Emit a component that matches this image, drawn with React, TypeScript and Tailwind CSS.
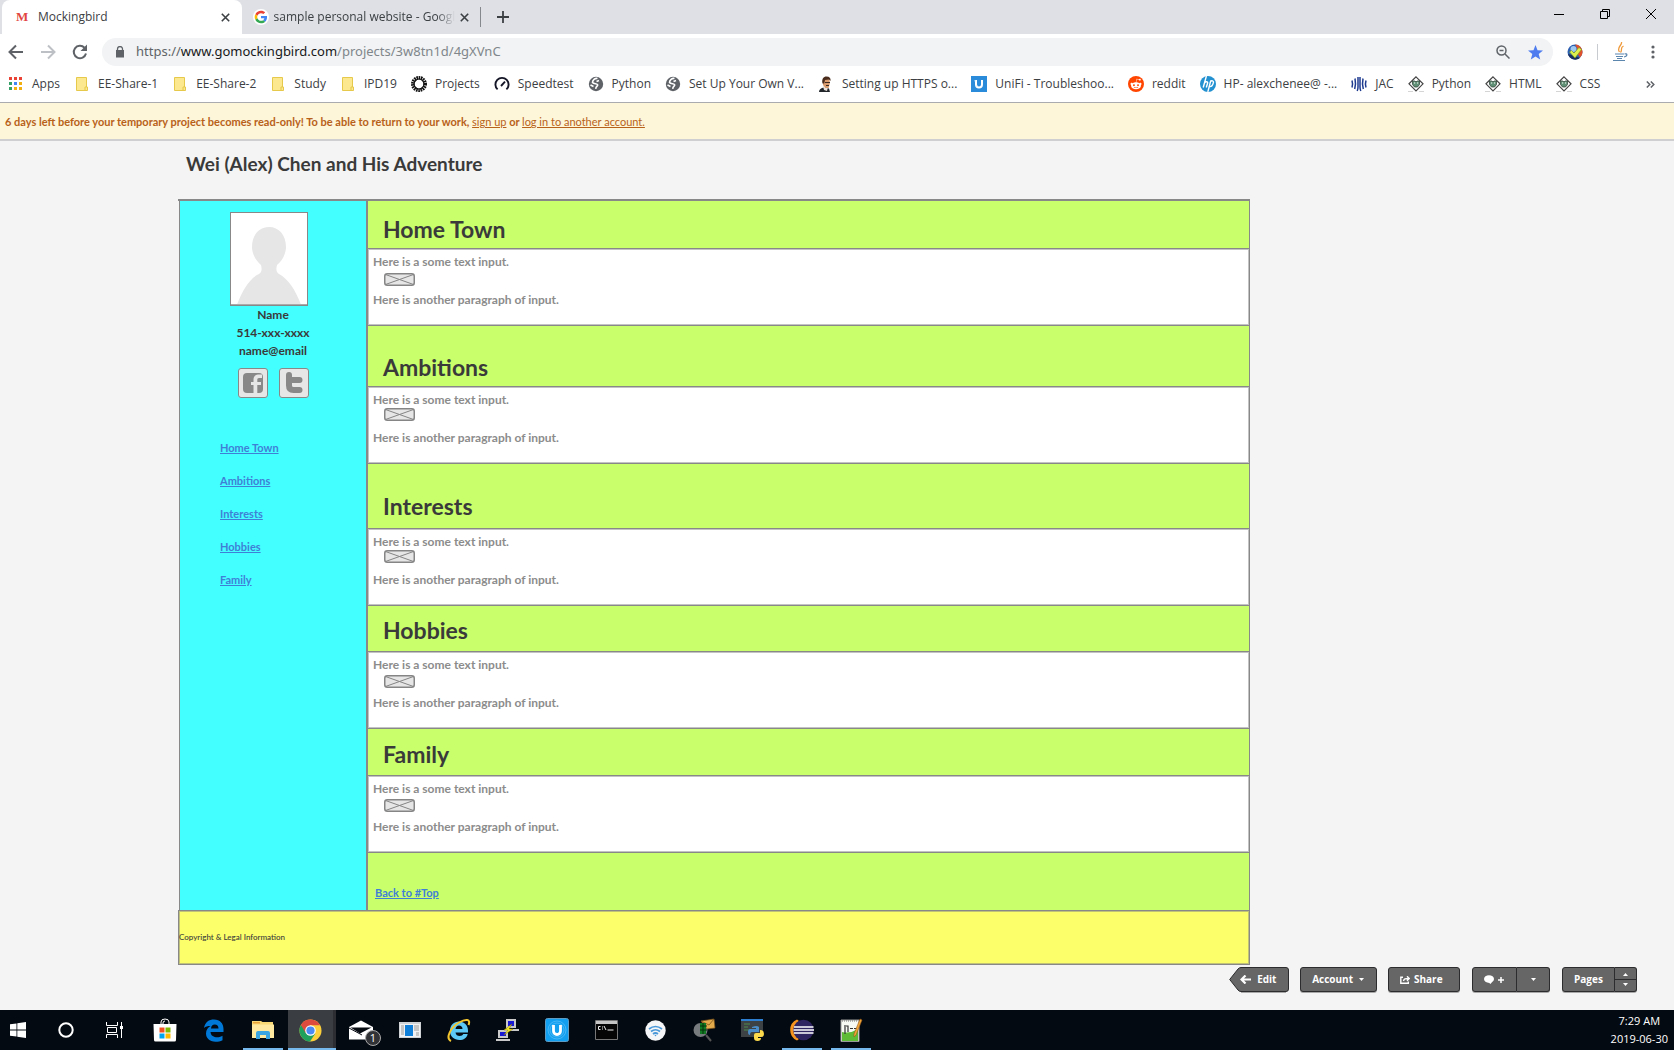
import React from "react";
import { FaRedditAlien } from "react-icons/fa";

const dark = "#5f6368";

/* ---------- Browser icons ---------- */

function Close() {
  return (
    <svg width="9" height="9" viewBox="0 0 9 9" stroke="#3c4043" strokeWidth="1.6">
      <path d="M0.8 0.8L8.2 8.2M8.2 0.8L0.8 8.2" />
    </svg>
  );
}

function GoogleG() {
  return (
    <svg width="16" height="16" viewBox="0 0 48 48" className="shrink-0 rounded-full bg-white">
      <g transform="translate(5 5) scale(.79)">
        <path fill="#EA4335" d="M24 9.5c3.5 0 6.700 1.200 9.200 3.600l6.900-6.900C35.900 2.400 30.500 0 24 0 14.600 0 6.500 5.400 2.600 13.200l8 6.200C12.400 13.700 17.700 9.500 24 9.500z" />
        <path fill="#4285F4" d="M47 24.600c0-1.600-.2-3.100-.4-4.600H24v9h12.900c-.6 3-2.200 5.500-4.800 7.200l7.700 6C44.400 38 47 31.800 47 24.600z" />
        <path fill="#FBBC05" d="M10.500 28.600c-.5-1.500-.8-3-.8-4.600s.3-3.100.8-4.600l-8-6.200C.9 16.500 0 20.100 0 24s.9 7.500 2.600 10.800l7.900-6.200z" />
        <path fill="#34A853" d="M24 48c6.500 0 11.900-2.100 15.900-5.800l-7.700-6c-2.200 1.500-4.900 2.300-8.200 2.300-6.300 0-11.600-4.200-13.500-9.900l-8 6.200C6.500 42.600 14.600 48 24 48z" />
      </g>
    </svg>
  );
}

function Folder() {
  return (
    <svg width="16" height="16" viewBox="0 0 16 16">
      <path d="M2.500 1.500h10v9.500h1v3.500h-11z" fill="#fbe88f" stroke="#e6c84b" />
      <path d="M11 14.500v-3.500h1.500" fill="none" stroke="#e6c84b" />
    </svg>
  );
}

function AppsIcon() {
  const colors = ["#ea4335", "#ea4335", "#ea4335", "#34a066", "#4285f4", "#f2b010", "#34a066", "#f2b010", "#f2b010"];
  return (
    <svg width="16" height="16" viewBox="0 0 16 16">
      {colors.map((c, i) => (
        <rect key={i} x={1 + (i % 3) * 5} y={1 + Math.floor(i / 3) * 5} width="3" height="3" fill={c} />
      ))}
    </svg>
  );
}

function Burst() {
  return (
    <svg width="16" height="16" viewBox="0 0 16 16">
      <circle cx="8" cy="8" r="6.200" fill="none" stroke="#111" strokeWidth="3.600" strokeDasharray="1.500 .664" />
      <circle cx="8" cy="8" r="5" fill="none" stroke="#111" strokeWidth="1.200" />
    </svg>
  );
}

function Gauge() {
  return (
    <svg width="16" height="16" viewBox="0 0 16 16" fill="none" stroke="#141526" strokeWidth="1.900">
      <path d="M3.600 13.400A6.600 6.600 0 1 1 12.400 13.400" />
      <path d="M7 10l4-4.300" />
    </svg>
  );
}

function Globe() {
  return (
    <svg width="16" height="16" viewBox="0 0 16 16">
      <circle cx="8" cy="8" r="7.200" fill={dark} />
      <path d="M9.500 2.500C7 2 4.500 4 4.500 6.500c1.500 1.800 5 .6 5.200 2.400.1 1.300-1.800 1.200-2 4M11 4.500L8.500 5.500M2.500 9l3 1.500" fill="none" stroke="#fff" strokeWidth="1.600" />
    </svg>
  );
}

function Portrait() {
  return (
    <svg width="16" height="16" viewBox="0 0 16 16">
      <path d="M1 16c0-2.500 2-4 5-4.500l5 1 1 3.500z" fill="#22262b" />
      <path d="M5 10l5 1-1 4-3-1z" fill="#e9e1da" />
      <path d="M5 3.500l6-1 1 4.500-1.500 5h-3L5 9z" fill="#d99a6c" />
      <path d="M4.500 7.500C3.500 3 5.500 .5 8.500 .5S13 2 12.500 5L11 3.500 7 4 6.200 7.500z" fill="#4a2c1c" />
      <path d="M7 6.500h5M8 9.500h3" stroke="#3a2a22" />
    </svg>
  );
}

function UnifiSmall() {
  return (
    <svg width="16" height="16" viewBox="0 0 16 16">
      <rect width="16" height="16" fill="#2a8bdb" />
      <path d="M5 4v4.500a3 3 0 0 0 6 0V4" fill="none" stroke="#fff" strokeWidth="2" />
      <path d="M4 4v1.500M6 9.500v1" stroke="#bfe0f8" />
    </svg>
  );
}

function Reddit() {
  return (
    <span className="flex h-4 w-4 items-center justify-center rounded-full bg-[#ff4500]">
      <FaRedditAlien size={12} color="#fff" />
    </span>
  );
}

function Hp() {
  return (
    <svg width="16" height="16" viewBox="0 0 16 16">
      <circle cx="8" cy="8" r="8" fill="#2390d0" />
      <path d="M6.400 0L3.200 11.500M4.300 7.500c1-2.300 4-2.300 3.200 0L6.300 11.500M10.800 4.500L7.800 16M10.300 5.700c1.200-1.500 3.700-1 3 1.200-.7 3.200-2.200 4-4.200 3.600" fill="none" stroke="#fff" strokeWidth="1.400" />
    </svg>
  );
}

function Jac() {
  return (
    <svg width="16" height="16" viewBox="0 0 16 16" fill="none" stroke="#1d3a8f" strokeWidth="1.500">
      <path d="M1 4.500c.8 2.500.8 4.500 0 7M4 2.500c.8 4 .8 7-.3 10.500M7 1v10c0 2-.3 3-.8 4M9 1v10c0 2 .3 3 .8 4M12 2.500c-.8 4-.8 7 .3 10.500M15 4.500c-.8 2.500-.8 4.500 0 7" />
    </svg>
  );
}

function Diamond() {
  return (
    <svg width="16" height="16" viewBox="0 0 16 16">
      <path d="M8 .8l7 7-7 7-7-7z" fill="#fff" stroke="#444" strokeWidth="1.200" />
      <path d="M4.500 5h2.500l1 1 1-1h2.500v3.500L9.500 11h-3L4.500 8.500z" fill="#5f8f74" stroke="#35473c" strokeWidth=".8" />
      <path d="M6 7h1.200M9 7h1.200" stroke="#fff" />
      <path d="M0 15.500h5M11 15.500h5" stroke="#d5d5d5" />
    </svg>
  );
}

const bookmarks: [string, React.FC][] = [
  ["Apps", AppsIcon],
  ["EE-Share-1", Folder],
  ["EE-Share-2", Folder],
  ["Study", Folder],
  ["IPD19", Folder],
  ["Projects", Burst],
  ["Speedtest", Gauge],
  ["Python", Globe],
  ["Set Up Your Own V...", Globe],
  ["Setting up HTTPS o...", Portrait],
  ["UniFi - Troubleshoo...", UnifiSmall],
  ["reddit", Reddit],
  ["HP- alexchenee@ -...", Hp],
  ["JAC", Jac],
  ["Python", Diamond],
  ["HTML", Diamond],
  ["CSS", Diamond],
];

function TabStrip() {
  return (
    <div className="flex h-[34px] items-stretch bg-[#dee0e5] pl-[2px] text-xs text-[#3c4043]">
      <div className="flex w-60 items-center rounded-t-lg bg-white pr-3 pl-[14px]">
        <span className="w-[22px] font-['Liberation_Serif'] text-[13px] font-bold text-[#e2463f]">M</span>
        <span className="flex-1">Mockingbird</span>
        <button aria-label="Close Mockingbird"><Close /></button>
      </div>
      <div className="flex w-[239px] items-center justify-between border-r border-[#85888d] pr-[11px] pl-[11px] [border-image:linear-gradient(transparent_22%,#85888d_22%_78%,transparent_78%)_1]">
        <GoogleG />
        <span className="whitespace-nowrap [mask-image:linear-gradient(to_right,black_90%,transparent)]">
          sample personal website - Googl
        </span>
        <button aria-label="Close sample personal website"><Close /></button>
      </div>
      <button aria-label="New tab" className="px-4">
        <svg width="12" height="12" viewBox="0 0 12 12" stroke="#3c4043" strokeWidth="1.800">
          <path d="M6 0v12M0 6h12" />
        </svg>
      </button>
      <div className="ml-auto flex items-center gap-9 pr-[18px] pb-[6px]">
        <button aria-label="Minimize">
          <svg width="10" height="10" viewBox="0 0 10 10"><path d="M0 5.500h10" stroke="#000" /></svg>
        </button>
        <button aria-label="Restore">
          <svg width="10" height="10" viewBox="0 0 10 10" fill="none" stroke="#000">
            <path d="M.5 2.500h7v7h-7zM2.500 2.500v-2h7v7h-2" />
          </svg>
        </button>
        <button aria-label="Close window">
          <svg width="10" height="10" viewBox="0 0 10 10" stroke="#000"><path d="M0 0l10 10M10 0L0 10" /></svg>
        </button>
      </div>
    </div>
  );
}

function Toolbar() {
  return (
    <div className="flex items-center bg-white pt-1 pr-[19px] pl-2">
      <button aria-label="Back">
        <svg width="16" height="16" viewBox="0 0 16 16" fill="none" stroke={dark} strokeWidth="2"><path d="M15 8H2M8 1.500L1.500 8 8 14.500" /></svg>
      </button>
      <button aria-label="Forward" className="ml-4">
        <svg width="16" height="16" viewBox="0 0 16 16" fill="none" stroke="#bdc1c6" strokeWidth="2"><path d="M1 8h13M8 1.500L14.500 8 8 14.500" /></svg>
      </button>
      <button aria-label="Reload" className="ml-4">
        <svg width="16" height="16" viewBox="0 0 16 16">
          <path d="M14 9.500A6.200 6.200 0 1 1 12.500 3.700" fill="none" stroke={dark} strokeWidth="2" />
          <path d="M15 .5v6.500H8.500z" fill={dark} />
        </svg>
      </button>
      <div className="ml-[14px] flex h-7 flex-1 items-center rounded-full bg-[#f1f3f4] pr-[10px] pl-[14px]">
        <svg width="8" height="12" viewBox="0 0 8 12">
          <path d="M0 4h8v7.500H0z" fill={dark} />
          <path d="M1.500 5V3a2.500 2.500 0 0 1 5 0v2" fill="none" stroke={dark} strokeWidth="1.300" />
        </svg>
        <span className="ml-3 flex-1 font-['Noto_Sans'] text-[13px] text-[#80868b]">
          <span className="text-[#5f6368]">https://</span>
          <span className="text-[#17181a]">www.gomockingbird.com</span>
          /projects/3w8tn1d/4gXVnC
        </span>
        <button aria-label="Zoom">
          <svg width="14" height="14" viewBox="0 0 14 14" fill="none" stroke={dark} strokeWidth="1.500">
            <circle cx="5.500" cy="5.500" r="4.500" /><path d="M9 9l4.500 4.500M3.500 5.500h4" />
          </svg>
        </button>
        <button aria-label="Bookmark this page" className="ml-[18px]">
          <svg width="15" height="15" viewBox="0 0 15 15">
            <path d="M7.500 0l2 5.200 5.500.3-4.300 3.500 1.500 5.500-4.700-3.100-4.700 3.100L4.300 9 0 5.500l5.500-.3z" fill="#4f7df0" />
          </svg>
        </button>
      </div>
      <button aria-label="Extension" className="ml-[14px]">
        <svg width="16" height="16" viewBox="0 0 16 16">
          <circle cx="8" cy="8" r="7.500" fill="#2d5fb0" />
          <path d="M8 .5A7.500 7.500 0 0 1 13 13.500L10 9V4z" fill="#e0522c" />
          <path d="M1 10a7.500 7.500 0 0 0 12 4l-5-2z" fill="#1c2f5c" />
          <circle cx="6.500" cy="5" r="3" fill="#9fc9ef" />
          <path d="M2.500 8l2-1.500L7 9l5-5.500 2.500 2L8 14z" fill="#dff04e" stroke="#6f9b1f" strokeWidth=".6" />
        </svg>
      </button>
      <span className="ml-[14px] h-4 w-px bg-[#c8cbd0]" />
      <button aria-label="Java extension" className="ml-[14px]">
        <svg width="17" height="20" viewBox="0 0 17 20" fill="none">
          <path d="M9.500 0C10.500 3.500 4 5 7.500 10M11.500 4C7.500 6 11 7.500 8.500 10.500" stroke="#ef9a3c" strokeWidth="1.300" />
          <path d="M3 12h9M4 14.500h7M5 16.500h5M12.500 12c3-1 3.500 2-.5 3M1 18.500h12" stroke="#5c86ad" strokeWidth="1.200" />
        </svg>
      </button>
      <button aria-label="Menu" className="ml-[22px]">
        <svg width="4" height="14" viewBox="0 0 4 14" fill={dark}>
          <circle cx="2" cy="2" r="1.600" /><circle cx="2" cy="7" r="1.600" /><circle cx="2" cy="12" r="1.600" />
        </svg>
      </button>
    </div>
  );
}

function Bookmarks() {
  return (
    <nav className="flex h-[37px] items-center gap-[14px] border-b border-[#a9abae] bg-white pr-[19px] pl-2 text-xs text-[#3c4043]">
      {bookmarks.map(([label, Icon], i) => (
        <a key={i} href="#" className="flex items-center gap-2 whitespace-nowrap">
          <Icon />
          {label}
        </a>
      ))}
      <button aria-label="More bookmarks" className="ml-auto">
        <svg width="9" height="7" viewBox="0 0 9 7" fill="none" stroke={dark} strokeWidth="1.500"><path d="M.8 .5l3 3-3 3M4.800 .5l3 3-3 3" /></svg>
      </button>
    </nav>
  );
}

/* ---------- Mockup page ---------- */

const sections = [
  { title: "Home Town", head: "pt-[14px] pb-[5px]", image: "pt-[3px]" },
  { title: "Ambitions", head: "pt-[27px] pb-[5px]", image: "" },
  { title: "Interests", head: "pt-7 pb-2", image: "" },
  { title: "Hobbies", head: "pt-[10px] pb-[7px]", image: "pt-[2px]" },
  { title: "Family", head: "pt-[11px] pb-[7px]", image: "pt-[2px]" },
];

const link = "font-bold text-[11px] leading-4 text-[#3f7fd6] underline";

function Placeholder() {
  return (
    <svg width="31" height="13" viewBox="0 0 31 13" fill="none" stroke="#858585">
      <rect x=".75" y=".75" width="29.500" height="11.500" rx="2.500" fill="#e6e6e6" strokeWidth="1.500" />
      <path d="M1.500 1.500l28 10M29.500 1.500l-28 10" />
    </svg>
  );
}

function Avatar() {
  return (
    <svg width="78" height="94" viewBox="0 0 78 94" className="mr-2">
      <rect x=".5" y=".5" width="77" height="93" fill="#fff" stroke="#888" />
      <path d="M7 92.500C13 77 20 66 29 62c3-2 3-5 2-9-5-4-9-11-9-18 0-12 7-20 17-20s17 8 17 20c0 7-4 14-9 18-1 4-1 7 2 9 9 5 16 15 22 30.500z" fill="#e6e6e6" />
      <path d="M1 92.500h76" stroke="#aaa" />
    </svg>
  );
}

function Social({ label, children }: { label: string; children: React.ReactNode }) {
  return (
    <button aria-label={label} className="flex h-[30px] w-[30px] items-center justify-center rounded-[3px] border border-[#888] bg-[#e6e6e6]">
      {children}
    </button>
  );
}

function Sidebar() {
  return (
    <aside className="ml-px w-[189px] shrink-0 border-r-2 border-l border-[#888] bg-[#44ffff]">
      <div className="flex flex-col items-center pt-[11px]">
        <Avatar />
        <p className="text-center text-xs leading-[18px] font-bold text-[#3a3a3a]">
          Name
          <br />
          514-xxx-xxxx
          <br />
          name@email
        </p>
        <div className="mt-2 flex gap-[11px]">
          <Social label="Facebook">
            <svg width="20" height="20" viewBox="0 0 20 20">
              <rect width="20" height="20" rx="4" fill="#888" />
              <path d="M10.500 20v-8H8V9h2.500V6.500C10.500 3.500 12.500 1.500 15 1.500h4V5h-3c-1.200 0-1.700.7-1.700 1.800V9H18v3h-3.700v8z" fill="#e6e6e6" />
            </svg>
          </Social>
          <Social label="Twitter">
            <svg width="18" height="22" viewBox="0 0 18 22">
              <path d="M4 3v10.500q0 4.500 4.500 4.500H14.500M4 8H14.500" fill="none" stroke="#888" strokeWidth="6" strokeLinecap="round" />
            </svg>
          </Social>
        </div>
      </div>
      <nav className="flex flex-col items-start gap-[17px] pt-[42px] pl-10">
        {sections.map((s) => (
          <a key={s.title} href="#" className={link}>
            {s.title}
          </a>
        ))}
      </nav>
    </aside>
  );
}

function Mockup() {
  return (
    <div className="mr-[424px] ml-[178px]">
      <div className="flex border-t-2 border-[#888]">
        <Sidebar />
        <div className="flex-1 border-r border-[#888] bg-[#c8ff6a]">
          {sections.map((s) => (
            <section key={s.title}>
              <h2 className={"pl-[15px] text-[23px] leading-7 font-bold text-[#3a3a3a] " + s.head}>{s.title}</h2>
              <div className="border-y border-[#888] bg-white pt-[5px] pb-[17px] pl-[5px] text-xs leading-4 font-bold text-[#8c8c8c] shadow-[inset_0_0_0_1px_#c3c3c3]">
                <p>Here is a some text input.</p>
                <div className={"h-[22px] pl-[11px] " + s.image}>
                  <Placeholder />
                </div>
                <p>Here is another paragraph of input.</p>
              </div>
            </section>
          ))}
          <div className="flex pt-8 pb-[9px] pl-[7px]">
            <a href="#" className={link}>Back to #Top</a>
          </div>
        </div>
      </div>
      <footer className="border border-[#888] bg-[#fcff6a] pt-5 pb-[21px] text-[8px] leading-3 font-medium text-[#3a3a3a] shadow-[inset_0_0_0_1px_#c0c277]">
        Copyright &amp; Legal Information
      </footer>
    </div>
  );
}

function Caret({ up = false }: { up?: boolean }) {
  return (
    <svg width="5" height="3" viewBox="0 0 5 3" fill="#fff">
      <path d={up ? "M0 3h5L2.500 0z" : "M0 0h5L2.500 3z"} />
    </svg>
  );
}

const btn = "flex h-[25px] items-center border border-[#2c2c2e] bg-[#666] shadow-[0_1px_0_#a8a8a8]";

function Actions() {
  return (
    <div className="mt-[2px] mr-[37px] flex justify-end font-['Open_Sans'] text-[10px] font-bold text-white">
      <button className="relative flex h-[25px] w-[60px] items-center gap-[6px] pl-[11px]">
        <svg className="absolute inset-0" width="60" height="26" viewBox="0 0 60 26">
          <path d="M12 25.500h45" stroke="#a8a8a8" />
          <path d="M.7 12.500L9 2q1.200-1.500 3-1.500h45q2.500 0 2.500 2.500v19q0 2.500-2.500 2.500H12q-1.800 0-3-1.500z" fill="#666" stroke="#2c2c2e" />
        </svg>
        <svg className="relative" width="11" height="9" viewBox="0 0 11 9" fill="none" stroke="#fff" strokeWidth="2.200">
          <path d="M11 4.500H2M5.500 .5l-4 4 4 4" />
        </svg>
        <span className="relative">Edit</span>
      </button>
      <button className={btn + " ml-[11px] gap-[6px] rounded-[3px] pr-3 pl-[11px]"}>
        Account <Caret />
      </button>
      <button className={btn + " ml-[11px] w-[72px] gap-1 rounded-[3px] pl-[11px]"}>
        <svg width="10" height="8" viewBox="0 0 10 8" fill="none" stroke="#fff" strokeWidth="1.400">
          <path d="M3 1.200H.8v6h7.500V5.500M3.500 5C4 2.800 5 2.500 8.500 2.500M7 .3l2.200 2.200L7 4.700" />
        </svg>
        Share
      </button>
      <button aria-label="Add comment" className={btn + " ml-3 w-[45px] gap-1 rounded-l-[3px] pl-[11px]"}>
        <svg width="10" height="9" viewBox="0 0 10 9" fill="#fff">
          <ellipse cx="5" cy="4" rx="5" ry="3.800" /><path d="M4 7h4L6.500 9z" />
        </svg>
        <svg width="6" height="6" viewBox="0 0 6 6" stroke="#fff" strokeWidth="1.500"><path d="M3 0v6M0 3h6" /></svg>
      </button>
      <button aria-label="Comment options" className={btn + " w-[33px] justify-center rounded-r-[3px] border-l-0"}>
        <Caret />
      </button>
      <button className={btn + " ml-3 w-[53px] rounded-l-[3px] pl-[11px]"}>Pages</button>
      <div className="flex h-[25px] w-[22px] flex-col divide-y divide-[#2c2c2e] rounded-r-[3px] border border-l-0 border-[#2c2c2e] bg-[#666] shadow-[0_1px_0_#a8a8a8]">
        <button aria-label="Previous page" className="flex flex-1 items-center justify-center pt-[2px]"><Caret up /></button>
        <button aria-label="Next page" className="flex flex-1 items-center justify-center pb-[2px]"><Caret /></button>
      </div>
    </div>
  );
}

/* ---------- Taskbar ---------- */

const running = "after:absolute after:inset-x-1 after:bottom-0 after:h-[2px] after:bg-[#76b9ed]";

const apps: { name: string; cls: string; icon: React.ReactNode }[] = [
  {
    name: "Store", cls: "",
    icon: (
      <svg width="24" height="24" viewBox="0 0 24 24">
        <path d="M8 7V4q0-3 4-3t4 3v3M10 7V5q0-2 2-2" fill="none" stroke="#fff" />
        <path d="M.5 6h23l-.5 16q0 1.500-1.500 1.500H2.500Q1 23.500 1 22z" fill="#fff" />
        <path d="M6.500 9.500h5v5h-5z" fill="#f25022" /><path d="M12.500 9.500h5v5h-5z" fill="#7fba00" />
        <path d="M6.500 15.500h5v5h-5z" fill="#00a4ef" /><path d="M12.500 15.500h5v5h-5z" fill="#ffb900" />
      </svg>
    ),
  },
  {
    name: "Edge", cls: "",
    icon: (
      <svg width="22" height="24" viewBox="0 0 22 24">
        <path d="M1 10C2 4 6 1.500 11 1.500c6 0 9.500 4 9.500 9.500v3h-13c.3 4 3.500 5.200 6.500 5.200 2.500 0 4.500-.7 5.500-1.500v4.500c-2 1-4.500 1.500-7 1.500-6 0-9.500-3.700-9.500-8.200C3 12 5 9.500 7.500 8 4.500 8 2.500 8.500 1 10zm7 .500h7.500C15.500 8 14 6.500 11.800 6.500S8.200 8 8 10.500z" fill="#0078d7" />
      </svg>
    ),
  },
  {
    name: "File Explorer", cls: running,
    icon: (
      <svg width="22" height="18" viewBox="0 0 22 18">
        <path d="M0 0h9l1.500 1H21v15H0z" fill="#f8d775" /><path d="M1 1h7v1.500H1z" fill="#e8a33a" /><path d="M0 3.500h22V17H0z" fill="#ffe8a0" />
        <path d="M4 18v-6q0-2 2-2h10q2 0 2 2v6h-4v-4H8v4z" fill="#3aa5e0" />
      </svg>
    ),
  },
  {
    name: "Chrome", cls: "bg-[#3a3d42] border-r-[3px] border-[#2b2d32] after:absolute after:left-0 after:-right-[3px] after:bottom-0 after:h-[2px] after:bg-[#76b9ed]",
    icon: (
      <svg width="23" height="23" viewBox="0 0 24 24">
        <circle cx="12" cy="12" r="11.500" fill="#fbcf3b" />
        <path d="M12 12L2 6.200A11.500 11.500 0 0 0 11.500 23.500L17 15z" fill="#1fa15d" />
        <path d="M12 6.500H22A11.500 11.500 0 0 0 2 6.200l5 8.500z" fill="#dd4b3e" />
        <circle cx="12" cy="12" r="5.500" fill="#fff" /><circle cx="12" cy="12" r="4.300" fill="#4a8af4" />
      </svg>
    ),
  },
  {
    name: "Mail, 1 unread", cls: "",
    icon: (
      <>
        <svg width="26" height="20" viewBox="0 0 26 20">
          <path d="M1 7L13 .5 25 7v12.500H1z" fill="#fff" /><path d="M2.500 7.500h21L12 13.500z" fill="#070b12" /><path d="M1 8l13 7" stroke="#070b12" />
        </svg>
        <span className="absolute top-5 left-7 flex h-4 w-4 items-center justify-center rounded-full border border-[#aaa] bg-[#303236] text-[11px] text-white">1</span>
      </>
    ),
  },
  {
    name: "News", cls: "",
    icon: (
      <svg width="22" height="16" viewBox="0 0 22 16">
        <path d="M0 0h22v16H0z" fill="#cfd3d6" /><path d="M1 2h20v13H1z" fill="#f0f1f2" /><path d="M6 3h8v11H6z" fill="#0f7fd8" />
        <path d="M2 4h3M2 6h3M2 8h3M2 10h3M2 12h3M15 4h5M15 6h5M15 8h5M17 11h3M17 13h3" stroke="#999" />
      </svg>
    ),
  },
  {
    name: "Internet Explorer", cls: "",
    icon: (
      <svg width="24" height="24" viewBox="0 0 24 24">
        <path d="M3 13C3 7 7 3.500 12 3.500S21 7 21 12.500v2H8.500c.3 2.500 2 3.500 4.200 3.500 1.800 0 3-.7 3.600-2h4.400c-1 4-4 6-8.200 6C7 22 3 18.500 3 13zm5.500-2h7c0-2-1.500-3.500-3.500-3.500S9 9 8.500 11z" fill="#5cc8f5" />
        <path d="M4 23C-2 20 4 9 12 4.500 19 .5 24 1 21.500 7" fill="none" stroke="#f3c62f" strokeWidth="2" />
      </svg>
    ),
  },
  {
    name: "PuTTY", cls: "",
    icon: (
      <svg width="24" height="24" viewBox="0 0 24 24">
        <path d="M10 1h10v9H10zM12 11h11v2H12zM2 12h10v8H2zM0 21h14v2H0z" fill="#c9c9c9" />
        <path d="M12 3h6v5h-6zM4 14h6v4H4z" fill="#1717d6" />
        <path d="M16 6l-8 6h4l-4 5 9-6h-4z" fill="#f7ee2b" stroke="#8a7a00" strokeWidth=".5" />
      </svg>
    ),
  },
  {
    name: "UniFi", cls: "",
    icon: (
      <svg width="24" height="24" viewBox="0 0 24 24">
        <rect x=".5" y=".5" width="23" height="23" rx="2" fill="#129ff0" stroke="#5e9cc4" />
        <circle cx="12" cy="12" r="9" fill="none" stroke="#5cc0f7" strokeWidth=".7" /><circle cx="12" cy="12" r="7" fill="none" stroke="#5cc0f7" strokeWidth=".7" />
        <path d="M8.500 7v6a3.500 3.500 0 0 0 7 0V7" fill="none" stroke="#fff" strokeWidth="2.800" />
      </svg>
    ),
  },
  {
    name: "Command Prompt", cls: "",
    icon: (
      <svg width="23" height="20" viewBox="0 0 23 20">
        <path d="M.5 .5h22v19H.5z" fill="#050505" stroke="#777" /><path d="M1 1h21v3H1z" fill="#c5c5c5" />
        <path d="M5.500 6.500H3.500v3h2M7.500 6.500v1M7.500 8.500v1M9 6l2 4M12.500 10h6" stroke="#eee" fill="none" />
      </svg>
    ),
  },
  {
    name: "Wi-Fi", cls: "",
    icon: (
      <svg width="21" height="21" viewBox="0 0 21 21" fill="none" stroke="#4a98d8" strokeWidth="1.700">
        <circle cx="10.500" cy="10.500" r="10.200" fill="#f4f6f8" stroke="none" />
        <path d="M4 9q6.500-5 13 0M6 11.500q4.500-3.500 9 0M8 14q2.500-2 5 0" /><circle cx="10.500" cy="15.500" r=".8" fill="#4a98d8" stroke="none" />
      </svg>
    ),
  },
  {
    name: "Packet Capture", cls: "",
    icon: (
      <svg width="24" height="24" viewBox="0 0 24 24">
        <circle cx="8.500" cy="12" r="7" fill="#777b7d" /><path d="M14 17l5 6" stroke="#555" strokeWidth="2" />
        <path d="M9 3l13-2 1 9-8 1z" fill="#e3ab4b" stroke="#7d551c" strokeWidth=".7" /><path d="M9 3l8 4 5-6" fill="none" stroke="#7d551c" strokeWidth=".8" />
        <path d="M8 5h6v11H8z" fill="#127a22" /><path d="M8 8h7M8 12h7M11 5v11" stroke="#04330b" />
      </svg>
    ),
  },
  {
    name: "Python", cls: "",
    icon: (
      <svg width="24" height="24" viewBox="0 0 24 24">
        <path d="M0 1h22v18H0z" fill="#3d4245" /><path d="M0 1h22v2H0z" fill="#2d7fd1" /><path d="M3 6h6M3 9h4M3 12h5" stroke="#4f8a4f" />
        <path d="M11 9q5-2 7 0v5h-7q-2 0-2 3-2 0-2-3t2-3h6v-1h-4z" fill="#4a8cc7" />
        <path d="M19 12q4 0 4 4 0 3-3 3h-3v1h3q0 3-3.500 3T13 20v-3q0-2 2-2h4z" fill="#fbd94b" />
      </svg>
    ),
  },
  {
    name: "Eclipse", cls: running,
    icon: (
      <svg width="24" height="24" viewBox="0 0 24 24">
        <path d="M7 1.500A11.500 11.500 0 0 0 7 22.500L9 21Q-1 12 9 3z" fill="#f7941e" />
        <circle cx="13.500" cy="12" r="10.300" fill="#2f2560" /><path d="M4 9h19.500M3.500 12h20.500M4 15h19.500" stroke="#fff" strokeWidth="1.500" />
      </svg>
    ),
  },
  {
    name: "Notepad++", cls: running,
    icon: (
      <svg width="24" height="24" viewBox="0 0 24 24">
        <path d="M2 2h18v21.500H2z" fill="#f6faf2" stroke="#999" /><path d="M3 14q8 2 16-3v12H3z" fill="#5dbb35" />
        <path d="M3 3h16" stroke="#777" strokeDasharray="1 1" />
        <path d="M6 7v9M7 8h2v6M11 10.500h3M15 10.500h3" stroke="#333" fill="none" strokeWidth="1.200" />
        <path d="M21 1l2 1-6 15-2 2v-3z" fill="#f2a73b" stroke="#9a5a16" strokeWidth=".6" />
      </svg>
    ),
  },
];

function Taskbar() {
  return (
    <footer className="flex h-10 items-stretch bg-[#040a11]">
      <button aria-label="Start" className="flex w-9 items-center justify-center">
        <svg width="16" height="16" viewBox="0 0 16 16" fill="#fff">
          <path d="M0 2.300L6.500 1.400v6.200H0zM7.300 1.300L16 0v7.600H7.300zM0 8.400h6.500v6.200L0 13.700zM7.300 8.400H16V16l-8.700-1.300z" />
        </svg>
      </button>
      <button aria-label="Cortana" className="ml-[6px] flex w-12 items-center justify-center">
        <svg width="16" height="16" viewBox="0 0 16 16"><circle cx="8" cy="8" r="6.700" fill="none" stroke="#fff" strokeWidth="2" /></svg>
      </button>
      <button aria-label="Task View" className="flex w-12 items-center justify-center">
        <svg width="17" height="16" viewBox="0 0 17 16" fill="none" stroke="#fff">
          <path d="M.5 0v3.500h11V0M1.500 5.500h9v5h-9zM.5 16v-3.500h11V16M15.500 0v16" /><path d="M14 4h3v3h-3z" fill="#fff" stroke="none" />
        </svg>
      </button>
      <div className="ml-[3px] flex gap-px">
        {apps.map((a) => (
          <button key={a.name} aria-label={a.name} className={"relative flex w-12 items-center justify-center " + a.cls}>
            {a.icon}
          </button>
        ))}
      </div>
      <div className="ml-auto flex flex-col items-center justify-center pr-[6px] text-[11px] leading-[18px] text-white">
        <time>7:29 AM</time>
        <time>2019-06-30</time>
      </div>
    </footer>
  );
}

export default function App() {
  return (
    <div className="flex min-h-screen flex-col bg-[#f4f4f4] font-['Open_Sans',sans-serif]">
      <header>
        <TabStrip />
        <Toolbar />
        <Bookmarks />
      </header>
      <main className="flex-1 font-['Lato',sans-serif]">
        <p className="border-b-2 border-[#cfcfd1] bg-[#fdf6d8] pt-[11px] pb-[9px] pl-[5px] text-[11px] leading-4 font-bold text-[#b8611a]">
          6 days left before your temporary project becomes read-only! To be able to return to your work,{" "}
          <a href="#" className="font-normal underline">sign up</a> or{" "}
          <a href="#" className="font-normal underline">log in to another account.</a>
        </p>
        <h1 className="pt-[9px] pb-[21px] pl-[186px] text-[19px] leading-7 font-bold text-[#3a3a3a]">Wei (Alex) Chen and His Adventure</h1>
        <Mockup />
        <Actions />
      </main>
      <Taskbar />
    </div>
  );
}
